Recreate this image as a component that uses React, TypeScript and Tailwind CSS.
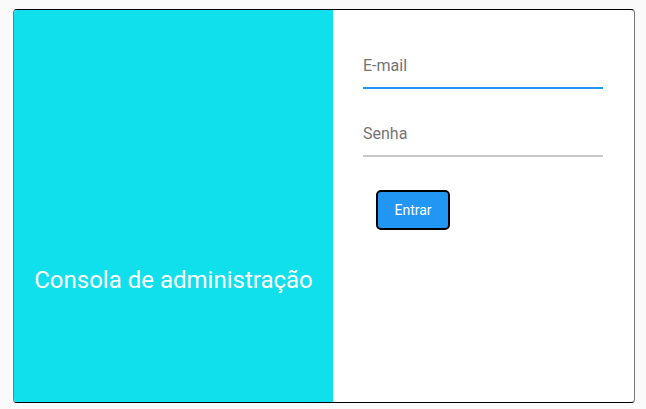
export default function App() {
  return (
    <div className="min-h-screen w-full bg-[#fafafa] pt-[9px] pl-[13px] font-['Roboto',sans-serif]">
      <div className="flex h-[394px] w-[622px] overflow-hidden rounded-[4px] border-y border-x border-y-black border-x-[#777] bg-white">
        <div className="flex w-[319px] shrink-0 items-end justify-center bg-[#10e0ec] pb-[107px]">
          <h1 className="text-[24px] leading-[30px] text-white">Consola de administração</h1>
        </div>
        <div className="flex flex-1 flex-col pl-[30px] pt-[35px]">
          <label className="flex w-[240px] flex-col">
            <input
              placeholder="E-mail"
              className="h-[44px] border-b-2 border-[#2196f3] bg-transparent pb-[2px] text-[16px] text-[#333] outline-none placeholder:text-[#757575]"
            />
          </label>
          <label className="mt-[24px] flex w-[240px] flex-col">
            <input
              type="password"
              placeholder="Senha"
              className="h-[44px] border-b-2 border-[#c8c8c8] bg-transparent pb-[2px] text-[16px] text-[#333] outline-none placeholder:text-[#757575]"
            />
          </label>
          <div className="mt-[33px] pl-[13px]">
            <button className="h-[40px] w-[74px] rounded-[5px] border-2 border-black bg-[#2196f3] text-[14px] text-white">
              Entrar
            </button>
          </div>
        </div>
      </div>
    </div>
  );
}
